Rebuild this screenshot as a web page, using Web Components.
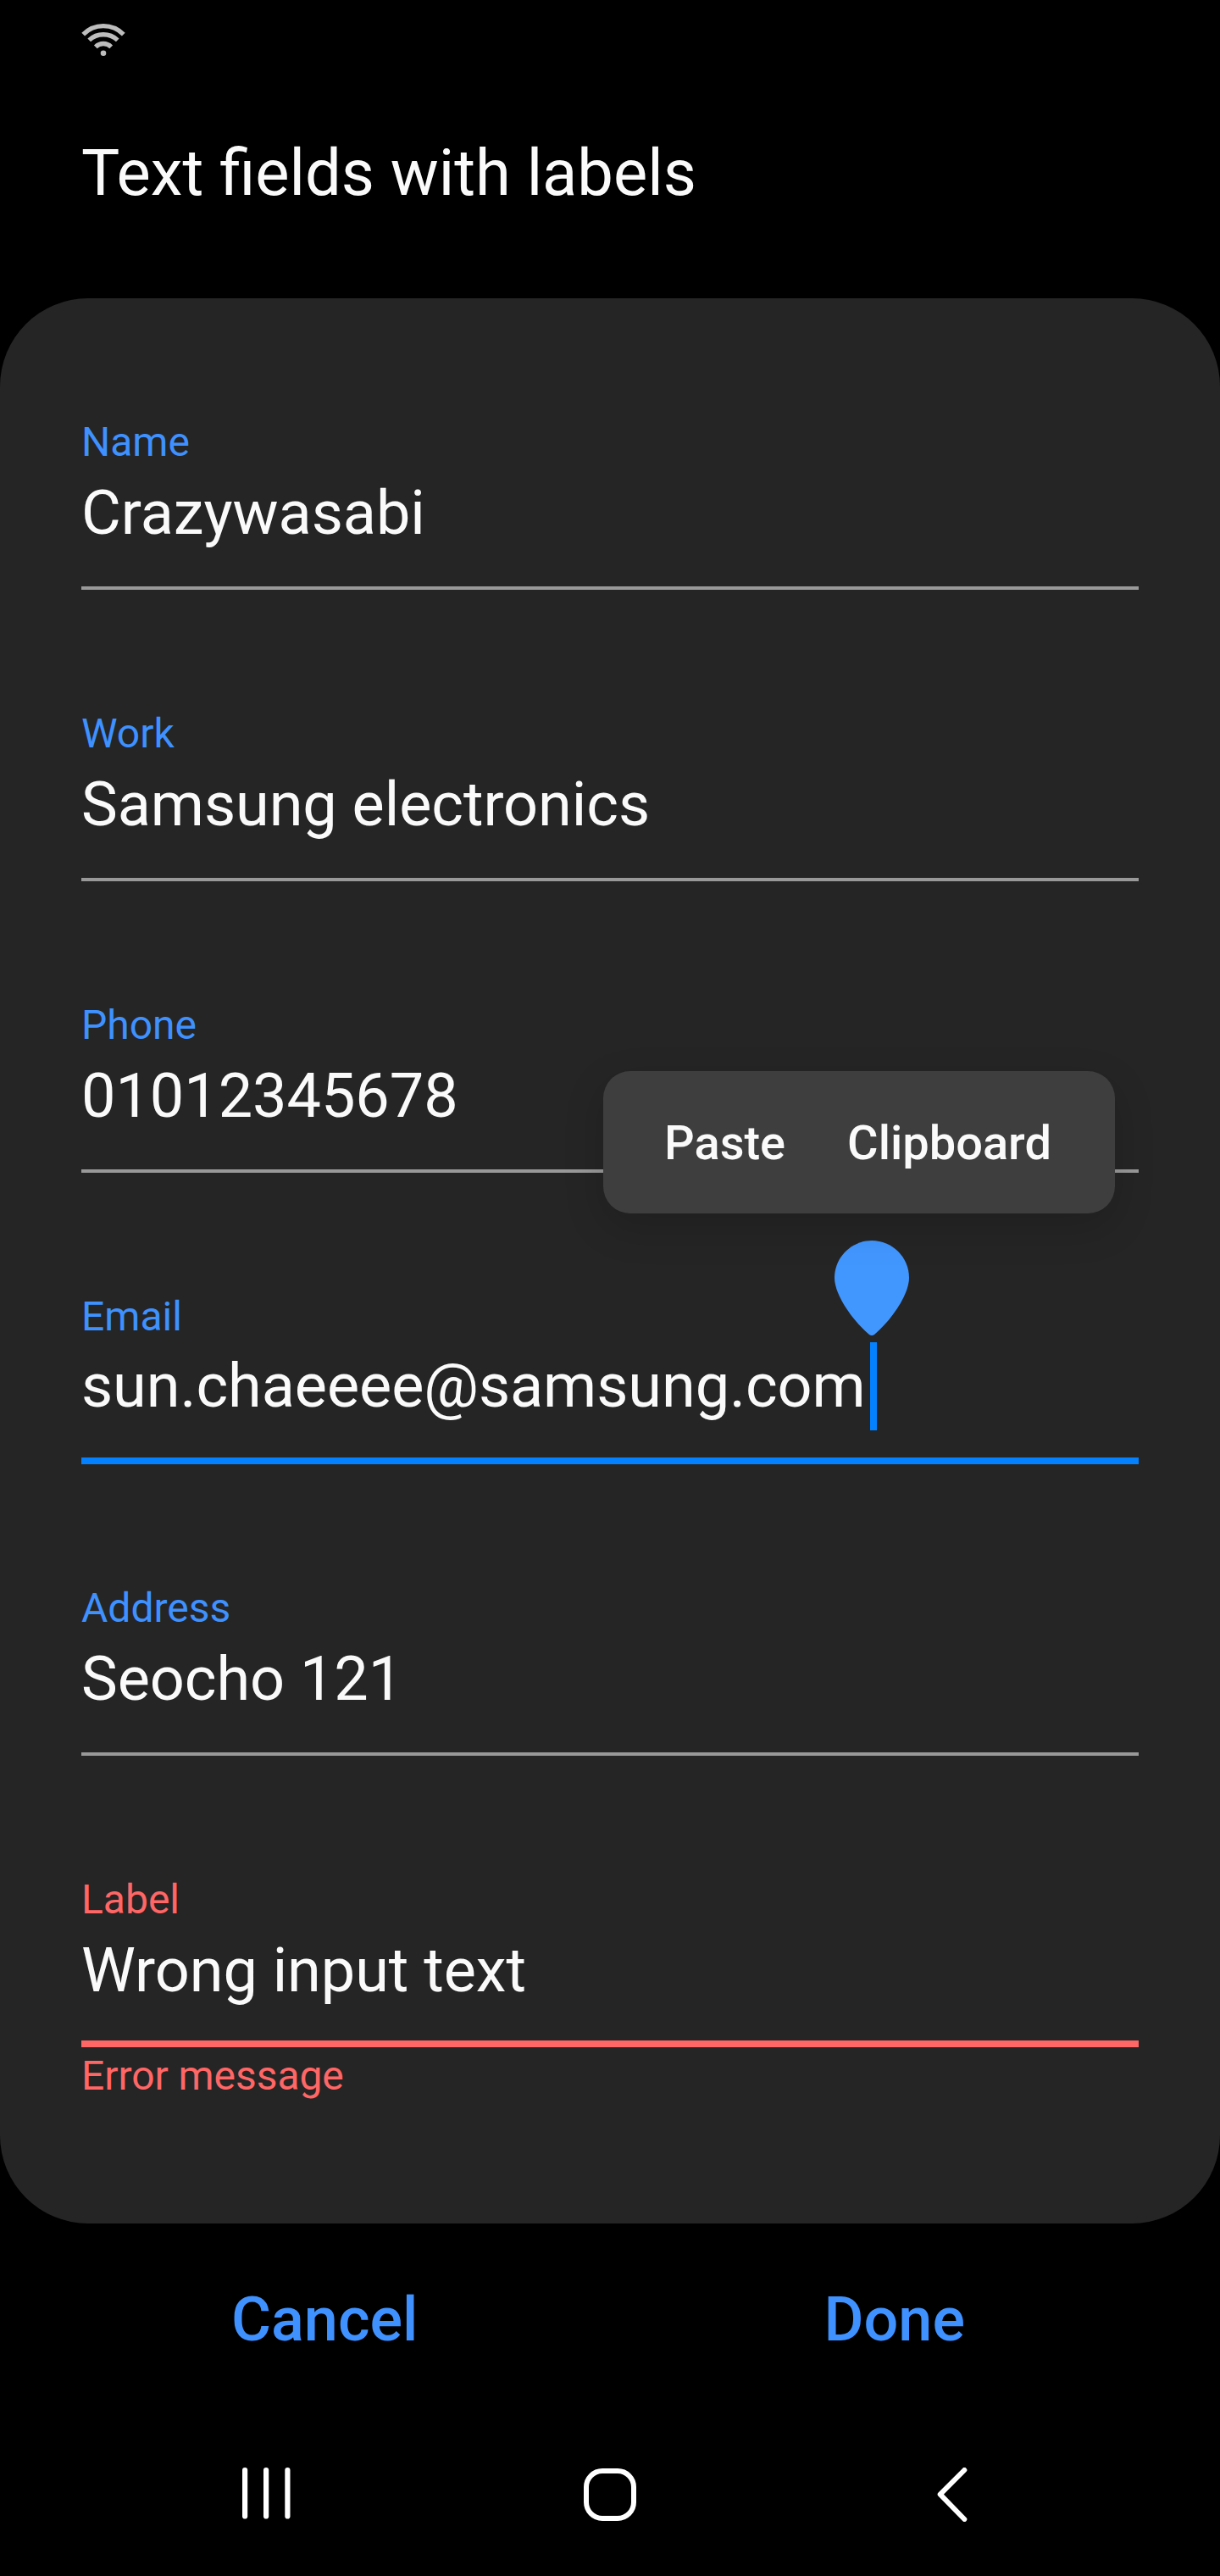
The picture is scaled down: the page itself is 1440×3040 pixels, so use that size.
<!DOCTYPE html>
<html lang="en">
<head>
<meta charset="utf-8">
<title>Text fields with labels</title>
<style>
html,body{margin:0;background:#000}
body{width:1440px;height:3040px;overflow:hidden;font-family:Roboto,"Liberation Sans",sans-serif;color:#fafafa}
</style>
</head>
<body>
<phone-screen>
  <status-bar slot="status"></status-bar>
  <screen-title slot="title">Text fields with labels</screen-title>
  <form-card>
    <text-field label="Name">Crazywasabi</text-field>
    <text-field label="Work">Samsung electronics</text-field>
    <text-field label="Phone">01012345678</text-field>
    <text-field label="Email" focused>sun.chaeeee@samsung.com<text-caret slot="caret"></text-caret></text-field>
    <text-field label="Address">Seocho 121</text-field>
    <text-field label="Label" error="Error message">Wrong input text</text-field>
    <context-popup slot="popup"><span>Paste</span><span>Clipboard</span></context-popup>
  </form-card>
  <action-bar slot="actions"><action-button>Cancel</action-button><action-button>Done</action-button></action-bar>
  <nav-bar slot="nav"></nav-bar>
</phone-screen>
<script>
function define(name, html, setup) {
  const template = document.createElement('template');
  template.innerHTML = html;
  customElements.define(name, class extends HTMLElement {
    constructor() {
      super();
      this.attachShadow({mode: 'open'}).appendChild(template.content.cloneNode(true));
    }
    connectedCallback() { if (setup) setup(this, this.shadowRoot); }
  });
}

define('phone-screen', `
<style>:host{display:flex;flex-direction:column;width:1440px;height:3040px;background:#000}</style>
<slot name="status"></slot><slot name="title"></slot><slot></slot><slot name="actions"></slot><slot name="nav"></slot>`);

define('status-bar', `
<style>:host{display:flex;box-sizing:border-box;height:96px;padding:26px 96px 0}svg{display:block}</style>
<svg width="52" height="42" viewBox="96 26 52 42" fill="none" stroke="#bdbdbd" stroke-width="5.3">
<path d="M98.2 40.7A33.3 33.3 0 0 1 145.8 40.7M105.2 47.4A24.6 24.6 0 0 1 138.8 47.4M112.8 55.3A13 13 0 0 1 131.2 55.3"/>
<circle cx="122" cy="62.7" r="3.3" fill="#bdbdbd" stroke="none"/></svg>`);

define('screen-title', `
<style>:host{display:block;box-sizing:border-box;height:256px;padding:64px 96px 0;font-size:75.9px;line-height:90px;white-space:nowrap}</style>
<slot></slot>`);

define('form-card', `
<style>
:host{display:flex;flex-direction:column;gap:141px;position:relative;box-sizing:border-box;height:2272px;padding:141px 96px 0;background:#252525;border-radius:104px}
::slotted(context-popup){position:absolute;left:712px;top:912px}
</style>
<slot></slot><slot name="popup"></slot>`);

define('text-field', `
<style>
:host{display:block;height:203px;--accent:#3e91ff;--line:#999}
:host([error]){--accent:#ff6666;--line:#ff6666}
:host([focused]){--line:#0381fe}
.box{display:flex;flex-direction:column;height:203px}
label{display:block;font-size:48px;line-height:57px;color:var(--accent)}
.value{display:flex;align-items:flex-start;margin-top:13px;height:85px;font-size:72px;line-height:85px;letter-spacing:-.05px;white-space:pre}
:host([focused]) .value{margin-top:11px}
.line{margin-top:auto;height:4px;background:var(--line)}
:host([focused]) .line,:host([error]) .line{height:8px}
.error{margin-top:5px;font-size:48px;line-height:57px;letter-spacing:-.06px;color:var(--accent)}
.error:empty{display:none}
</style>
<div class="box"><label></label><div class="value"><span><slot></slot></span><slot name="caret"></slot></div><div class="line"></div></div>
<div class="error"></div>`, (el, root) => {
  root.querySelector('label').textContent = el.getAttribute('label');
  root.querySelector('.error').textContent = el.getAttribute('error') || '';
});

define('text-caret', `
<style>
:host{display:block;position:relative;width:8px;height:104px;margin:-9px 0 0 5px;background:#0381fe}
svg{position:absolute;left:-42px;top:-120px;display:block}
</style>
<svg width="88" height="112" viewBox="0 0 88 112"><path fill="#4297ff" d="M44 0C20 0 0 19.500 0 44C0 64 21 94 41 111Q44 113 47 111C67 94 88 64 88 44C88 19.500 68 0 44 0Z"/></svg>`);

define('context-popup', `
<style>
:host{display:flex;box-sizing:border-box;width:604px;height:168px;padding:52px 68px 0 72px;gap:73px;background:#3e3e3e;border-radius:32px;box-shadow:0 16px 48px rgba(0,0,0,.16);font-size:56px;line-height:66px;font-weight:500}
</style><slot></slot>`);

define('action-bar', `
<style>:host{display:flex;box-sizing:border-box;height:256px;padding:71px 48px 0 47px}</style><slot></slot>`);

define('action-button', `
<style>:host{display:block;flex:1;text-align:center;font-size:72px;line-height:85px;font-weight:500;color:#3e91ff}</style><slot></slot>`);

define('nav-bar', `
<style>:host{display:flex;height:64px;padding:32px 0 0 286px}svg{display:block}.home{margin:0 354px 0 345px}</style>
<svg width="57" height="64" viewBox="286 2912 57 64" fill="#fff"><rect x="286" y="2912" width="6.200" height="60.500" rx="3.100"/><rect x="311" y="2912" width="6.200" height="60.500" rx="3.100"/><rect x="336.300" y="2912" width="6.200" height="60.500" rx="3.100"/></svg>
<svg class="home" width="64" height="64" viewBox="688 2912 64 64" fill="none" stroke="#fff" stroke-width="6"><rect x="692" y="2916" width="56" height="56" rx="19"/></svg>
<svg width="36" height="64" viewBox="1106 2912 36 64" fill="none" stroke="#fff" stroke-width="6" stroke-linecap="round" stroke-linejoin="round"><path d="M1138.300 2915L1109.700 2943.700L1138.300 2973"/></svg>`);
</script>
</body>
</html>
